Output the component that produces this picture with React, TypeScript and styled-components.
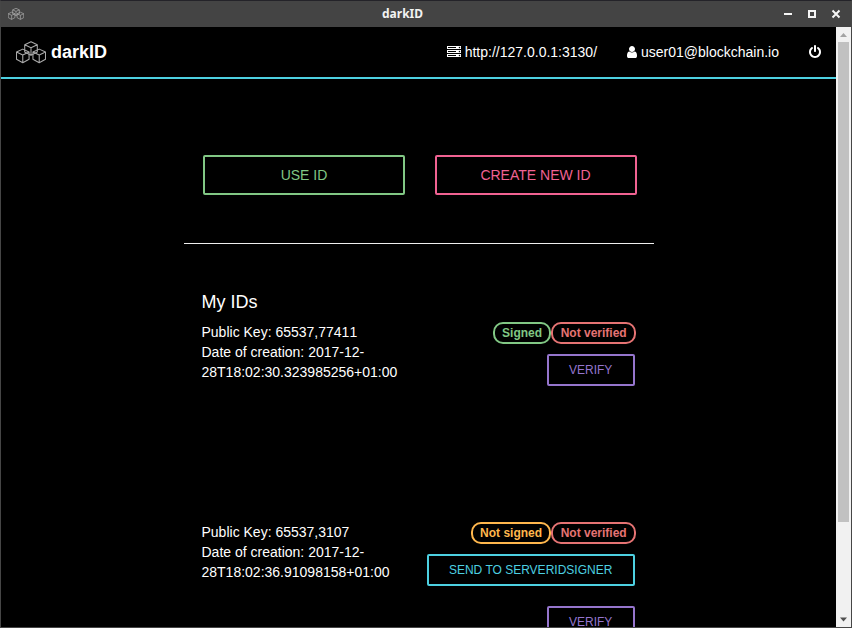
import React from "react";
import styled, { createGlobalStyle } from "styled-components";

const GlobalStyle = createGlobalStyle`
  *, *::before, *::after { box-sizing: border-box; }
  body { margin: 0; background: #000; overflow: hidden; }
`;

const green = "#81c784";
const pink = "#f06292";
const purple = "#9575cd";
const cyan = "#4dd0e1";
const red = "#e57373";
const orange = "#ffb74d";

const Window = styled.div`
  display: flex;
  flex-direction: column;
  width: 852px;
  height: 628px;
  border: 1px solid #464646;
  border-top-color: #242329;
  background: #000;
  color: #fff;
  font: 14px/20px "Liberation Sans", Arial, sans-serif;
`;

const TitleBar = styled.header`
  display: flex;
  align-items: center;
  flex: none;
  height: 26px;
  padding: 0 9px 0 7px;
  background: #444;
`;

const WindowTitle = styled.span`
  margin: 0 auto 0 358px;
  font: 700 12px/20px "Noto Sans", sans-serif;
  color: #f2f2f2;
`;

const TitleControls = styled.div`
  display: flex;
  gap: 12px;
`;

const Control = styled.svg`
  display: block;
  width: 12px;
  height: 12px;
  fill: none;
  stroke: #f5f5f5;
  stroke-width: 2;
`;

const Body = styled.div`
  display: flex;
  flex: 1;
  min-height: 0;
`;

const Page = styled.div`
  flex: 1;
  min-width: 0;
  overflow: hidden;
`;

const Navbar = styled.nav`
  display: flex;
  align-items: center;
  height: 52px;
  padding: 0 15px;
  border-bottom: 2px solid ${cyan};
`;

const Brand = styled.div`
  display: flex;
  align-items: center;
  gap: 5px;
  margin-right: auto;
  font-size: 18px;
  font-weight: 700;
`;

const NavItem = styled.span`
  display: flex;
  align-items: center;
  gap: 4px;
  margin-left: 30px;
`;

const Glyph = styled.svg<{ $w: number }>`
  display: block;
  width: ${({ $w }) => $w}px;
  height: 14px;
  fill: #fff;
`;

const Content = styled.main`
  width: 470px;
  margin: 76px 0 0 182.5px;
`;

const Actions = styled.div`
  display: flex;
  gap: 29.5px;
  padding-left: 19.5px;
`;

const Button = styled.button<{ $color: string; $large?: boolean }>`
  flex: none;
  width: ${({ $large }) => ($large ? "202px" : "auto")};
  height: ${({ $large }) => ($large ? 40 : 32)}px;
  padding: 0 20.4px;
  border: 2px solid ${({ $color }) => $color};
  border-radius: 2px;
  background: transparent;
  color: ${({ $color }) => $color};
  font: ${({ $large }) => ($large ? 14 : 12)}px/20px "Liberation Sans", Arial, sans-serif;
  text-transform: uppercase;
  white-space: nowrap;
`;

const Divider = styled.hr`
  height: 1px;
  margin: 48px 0;
  border: 0;
  background: #eee;
`;

const Heading = styled.h4`
  margin: 0 0 9px 18px;
  font-size: 18px;
  font-weight: 400;
  line-height: 21px;
`;

const IdRow = styled.section`
  display: flex;
  justify-content: space-between;
  height: 200px;
  padding: 0 17.5px 0 18px;
`;

const Details = styled.div`
  width: 205px;
`;

const PublicKey = styled.div`
  font-kerning: none;
`;

const Status = styled.div`
  display: flex;
  flex-direction: column;
  align-items: flex-end;
`;

const Badges = styled.div`
  display: flex;
  margin-bottom: 10px;
`;

const Badge = styled.span<{ $color: string }>`
  height: 22px;
  padding: 0 7.3px;
  border: 2px solid ${({ $color }) => $color};
  border-radius: 10px;
  color: ${({ $color }) => $color};
  font-size: 12px;
  font-weight: 700;
  line-height: 18px;
`;

const ButtonStack = styled.div`
  display: flex;
  flex-direction: column;
  align-items: flex-end;
  gap: 20px;
  margin-right: 1.3px;
`;

const Scrollbar = styled.div`
  display: flex;
  flex-direction: column;
  align-items: center;
  flex: none;
  width: 15px;
  background: #f1f1f1;
`;

const Thumb = styled.div`
  width: 11px;
  height: 480px;
  margin-bottom: auto;
  background: #c1c1c1;
`;

const Arrow = styled.svg`
  display: block;
  width: 15px;
  height: 15px;
`;

const LogoSvg = styled.svg`
  display: block;
  fill: none;
  stroke: #aaa;
  stroke-linejoin: round;
`;

function Cubes({ width, height, stroke }: { width: number; height: number; stroke: number }) {
  const cube = "M0 3.5 6.5 0.5 13 3.5V11L6.5 14.5 0 11ZM0 3.5 6.5 6.5 13 3.5M6.5 6.5V14.5";
  return (
    <LogoSvg width={width} height={height} viewBox="0 0 31 23" strokeWidth={stroke}>
      <path d={cube} transform="translate(9 0)" />
      <path d={cube} transform="translate(.5 7.5)" />
      <path d={cube} transform="translate(17.5 7.5)" />
    </LogoSvg>
  );
}

const serverPath =
  "M128 1408h1024v-128h-1024v128zm0-512h1024v-128h-1024v128zm1568 448q0-40-28-68t-68-28-68 28-28 68 28 68 68 28 68-28 28-68zm-1568-960h1024v-128h-1024v128zm1568 448q0-40-28-68t-68-28-68 28-28 68 28 68 68 28 68-28 28-68zm0-512q0-40-28-68t-68-28-68 28-28 68 28 68 68 28 68-28 28-68zm96 832v384h-1792v-384h1792zm0-512v384h-1792v-384h1792zm0-512v384h-1792v-384h1792z";
const userPath =
  "M1280 1399q0 109-62.5 187t-150.5 78h-854q-88 0-150.5-78t-62.5-187q0-85 8.5-160.5t31.5-152 58.5-131 94-89 134.5-34.5q131 128 313 128t313-128q76 0 134.5 34.5t94 89 58.5 131 31.5 152 8.5 160.5zm-256-887q0 159-112.5 271.5t-271.5 112.5-271.5-112.5-112.5-271.5 112.5-271.5 271.5-112.5 271.5 112.5 112.5 271.5z";
const powerPath =
  "M1536 896q0 156-61 298t-164 245-245 164-298 61-298-61-245-164-164-245-61-298q0-182 80.5-343t226.5-270q43-32 95.5-25t83.5 50q32 42 24.5 94.5t-49.5 84.5q-98 74-151.5 181t-53.5 228q0 104 40.5 198.5t109.5 163.5 163.5 109.5 198.5 40.5 198.5-40.5 163.5-109.5 109.5-163.5 40.5-198.5q0-121-53.5-228t-151.5-181q-42-32-49.5-84.5t24.5-94.5q31-43 84-50t95 25q146 109 226.5 270t80.5 343zm-640-768v640q0 52-38 90t-90 38-90-38-38-90v-640q0-52 38-90t90-38 90 38 38 90z";

function Icon({ path, units }: { path: string; units: number }) {
  return (
    <Glyph $w={units / 128} viewBox={`0 0 ${units} 1792`}>
      <path d={path} />
    </Glyph>
  );
}

const ids = [
  { key: "65537,77411", date: "2017-12-28T18:02:30.323985256+01:00", signed: true },
  { key: "65537,3107", date: "2017-12-28T18:02:36.91098158+01:00", signed: false },
];

export default function App() {
  return (
    <Window>
      <GlobalStyle />
      <TitleBar>
        <Cubes width={16} height={12} stroke={1.4} />
        <WindowTitle>darkID</WindowTitle>
        <TitleControls>
          <Control viewBox="0 0 12 12"><path d="M2 6H10" /></Control>
          <Control viewBox="0 0 12 12"><path d="M3 3H9V9H3Z" /></Control>
          <Control viewBox="0 0 12 12"><path d="M2.5 2.5 9.5 9.5M9.5 2.5 2.5 9.5" /></Control>
        </TitleControls>
      </TitleBar>
      <Body>
        <Page>
          <Navbar>
            <Brand><Cubes width={30} height={23} stroke={1.1} />darkID</Brand>
            <NavItem><Icon path={serverPath} units={1792} />http://127.0.0.1:3130/</NavItem>
            <NavItem><Icon path={userPath} units={1280} />user01@blockchain.io</NavItem>
            <NavItem><Icon path={powerPath} units={1536} /></NavItem>
          </Navbar>
          <Content>
            <Actions>
              <Button $large $color={green}>Use ID</Button>
              <Button $large $color={pink}>Create new ID</Button>
            </Actions>
            <Divider />
            <Heading>My IDs</Heading>
            {ids.map((id) => (
              <IdRow key={id.key}>
                <Details>
                  <PublicKey>Public Key: {id.key}</PublicKey>
                  <div>Date of creation: {id.date}</div>
                </Details>
                <Status>
                  <Badges>
                    <Badge $color={id.signed ? green : orange}>{id.signed ? "Signed" : "Not signed"}</Badge>
                    <Badge $color={red}>Not verified</Badge>
                  </Badges>
                  <ButtonStack>
                    {!id.signed && <Button $color={cyan}>Send to ServerIDsigner</Button>}
                    <Button $color={purple}>Verify</Button>
                  </ButtonStack>
                </Status>
              </IdRow>
            ))}
          </Content>
        </Page>
        <Scrollbar>
          <Arrow viewBox="0 0 15 15"><path d="M4 10 7.5 6 11 10Z" fill="#a3a3a3" /></Arrow>
          <Thumb />
          <Arrow viewBox="0 0 15 15"><path d="M4 5.5H11L7.5 9.5Z" fill="#505050" /></Arrow>
        </Scrollbar>
      </Body>
    </Window>
  );
}
